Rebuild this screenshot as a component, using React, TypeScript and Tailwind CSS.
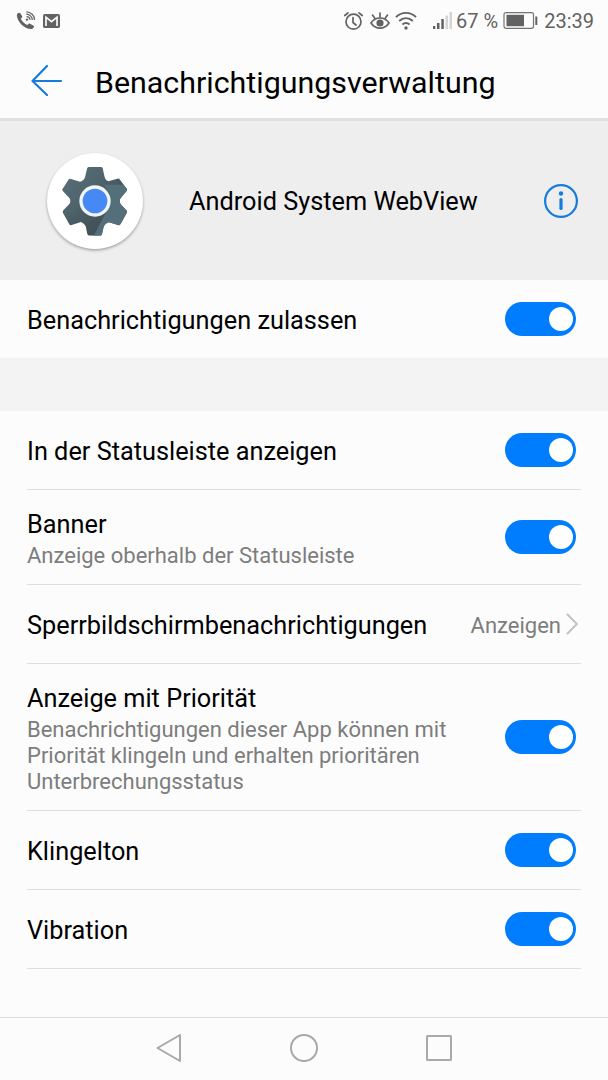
import { useState, type ReactNode } from 'react'
import clsx from 'clsx'

interface SettingDef {
  id: string
  title: string
  summary?: string
  value?: string
  rowClass: string
}

const SETTINGS: SettingDef[] = [
  { id: 'statusbar', title: 'In der Statusleiste anzeigen', rowClass: 'h-[79px]' },
  { id: 'banner', title: 'Banner', summary: 'Anzeige oberhalb der Statusleiste', rowClass: 'h-[95px]' },
  { id: 'lockscreen', title: 'Sperrbildschirmbenachrichtigungen', value: 'Anzeigen', rowClass: 'h-[79px]' },
  {
    id: 'priority',
    title: 'Anzeige mit Priorität',
    summary: 'Benachrichtigungen dieser App können mit Priorität klingeln und erhalten prioritären Unterbrechungsstatus',
    rowClass: 'h-[147px]',
  },
  { id: 'ringtone', title: 'Klingelton', rowClass: 'h-[79px]' },
  { id: 'vibration', title: 'Vibration', rowClass: 'h-[79px]' },
]

function Toggle({ label }: { label: string }) {
  const [on, setOn] = useState(true)

  return (
    <button
      type="button"
      role="switch"
      aria-checked={on}
      aria-label={label}
      onClick={() => setOn(!on)}
      className={clsx(
        'flex h-[34px] w-[71px] shrink-0 items-center rounded-full px-[3px]',
        on ? 'justify-end bg-[#007dff]' : 'justify-start bg-[#c4c4c4]',
      )}
    >
      <span className="size-6 rounded-full bg-white" />
    </button>
  )
}

function StatusBar() {
  return (
    <div className="flex h-[42px] items-center pl-4 pr-[14px] text-[20px] leading-none text-[#626262]">
      <svg className="h-5 w-5 shrink-0" viewBox="0 0 20 20" fill="none">
        <path
          d="M1.300 2.800C2.300 1.600 3.400 1.400 4.300 2.300L6.100 5.100c.3.600.2 1.100-.3 1.600l-1 1c1.300 2.700 3.400 4.900 6.400 6.200l1.200-1c.5-.4 1-.4 1.600-.1l3.200 1.700c.8.500 1 1.100.6 1.800-.5 1-1.500 1.900-2.900 1.800C8.200 18 1 10.200.9 4.400c0-.6.1-1.100.4-1.600Z"
          fill="#626262"
        />
        <circle cx="11" cy="8.600" r="1.200" fill="#626262" />
        <path d="M10.500 5.600a3.500 3.500 0 0 1 3.500 3.500M10.300 3.200a5.900 5.900 0 0 1 6 5.900M10.300.9a8.200 8.200 0 0 1 8.300 8.200" stroke="#626262" strokeWidth="1.200" />
      </svg>
      <svg className="ml-[7px] h-[14px] w-[17px] shrink-0" viewBox="0 0 17 14" fill="none">
        <rect width="17" height="14" rx="1.700" fill="#626262" />
        <path d="M3 12V3.200l5.500 4.500L14 3.200V12" stroke="#fcfcfc" strokeWidth="1.700" />
      </svg>
      <svg className="ml-[283px] h-5 w-5 shrink-0" viewBox="0 0 20 20" fill="none" stroke="#626262" strokeWidth="1.700">
        <circle cx="10.500" cy="10.700" r="7.500" />
        <path d="M10 6.500v5l3 2.500M1.800 4.500 5 1.800M16 1.800l3.200 2.700" strokeLinecap="round" />
      </svg>
      <svg className="ml-[7px] h-5 w-5 shrink-0" viewBox="0 0 20 20" fill="none" stroke="#626262" strokeWidth="1.700">
        <path d="M1 12c2.200-3.300 5.200-5 9-5s6.800 1.700 9 5c-2.200 3.400-5.200 5.100-9 5.100S3.200 15.400 1 12Z" />
        <path d="M10 6V2M4.800 7.300 2.500 4.100M15.200 7.300l2.300-3.200" strokeLinecap="round" />
        <circle cx="10" cy="12" r="3.600" fill="#626262" stroke="none" />
      </svg>
      <svg className="ml-[5px] h-5 w-[22px] shrink-0" viewBox="0 0 22 20" fill="none" stroke="#626262" strokeWidth="1.900">
        <path d="M1 6.200C6.500.4 15.500.4 21 6.200M4.200 10c4-3.900 9.600-3.900 13.600 0M7.400 13.500c2.200-1.900 5-1.900 7.200 0" />
        <circle cx="11" cy="17" r="1.700" fill="#626262" stroke="none" />
      </svg>
      <svg className="ml-[15px] h-5 w-5 shrink-0" viewBox="0 0 20 20">
        <path d="M1 15h2.300v3H1zM5 12h2.500v6H5zM9.300 8h2.500v10H9.300z" fill="#626262" />
        <path d="M13.500 4.500H16V18h-2.500zM17.500 1H20v17h-2.500z" fill="#d4d4d4" />
      </svg>
      <span className="ml-1 w-[42px] shrink-0 whitespace-nowrap">67 %</span>
      <svg className="mb-px ml-[5px] h-[17px] w-[35px] shrink-0" viewBox="0 0 35 17" fill="none">
        <rect x="1" y=".7" width="29.500" height="15.600" rx="2" stroke="#747474" strokeWidth="1.200" />
        <path d="M3.500 2.800h17.500v11.400H3.500z" fill="#626262" />
        <path d="M32.300 4.500h2v8.500h-2z" fill="#626262" />
      </svg>
      <span className="ml-auto shrink-0">23:39</span>
    </div>
  )
}

function WebViewIcon() {
  return (
    <div className="size-24 shrink-0 rounded-full bg-white shadow-[0_1.5px_3px_rgba(0,0,0,0.32)]">
      <svg className="size-24" viewBox="51 129 288 288">
        <defs>
          <linearGradient id="gear" x1="0" y1="0" x2="1" y2="1">
            <stop offset="0" stopColor="#5a727b" />
            <stop offset="0.35" stopColor="#50656d" />
            <stop offset="0.65" stopColor="#435359" />
            <stop offset="1" stopColor="#3b494f" />
          </linearGradient>
          <clipPath id="teeth">
            <path d="M178 171h35q4 0 5 4l6 27q2 9 11 12l27-8q5-2 8 3l20 27q3 5-1 8l-17 20q-6 9 0 19l17 18q4 4 1 8l-18 32q-3 6-8 4l-27-8q-11 2-16 13l-5 22q-1 5-6 5h-32q-5 0-6-5l-5-23q-4-9-14-13l-28 9q-5 2-8-4l-18-32q-2-4 1-8l18-19q6-9 0-18l-19-20q-4-4-1-8l17-26q3-5 8-3l27 8q12-3 15-13l6-26q1-5 5-5Z" />
          </clipPath>
        </defs>
        <g clipPath="url(#teeth)">
          <path d="M90 165h215v218H90z" fill="url(#gear)" />
          <path d="M222 224h85v160H188l34-67 14-23 4-43Z" fill="#546f7a" />
        </g>
        <circle cx="195" cy="273" r="47" fill="#f0f5fa" />
        <circle cx="195" cy="273" r="37" fill="#4688f4" />
      </svg>
    </div>
  )
}

function SettingRow({ setting }: { setting: SettingDef }) {
  const { title, summary, value, rowClass } = setting

  return (
    <div className={clsx('ml-[27px] mr-[27px] flex shrink-0 items-center border-b border-[#dedede]', rowClass)}>
      <div className="min-w-0 flex-1">
        <div className={clsx('whitespace-nowrap text-[25.300px] leading-[34px]', summary ? 'pt-0.5' : 'pt-[3px]')}>
          {title}
        </div>
        {summary && <p className="mt-px w-[440px] text-[22px] leading-[26px] text-[#7d7d7d]">{summary}</p>}
      </div>
      {value ? (
        <div className="mr-[3px] flex items-center gap-[5px]">
          <span className="pt-0.5 text-[22px] text-[#7d7d7d]">{value}</span>
          <svg className="h-[22px] w-3" viewBox="0 0 12 22" fill="none" stroke="#c0c0c0" strokeWidth="1.900">
            <path d="m1 1 10 10L1 21" />
          </svg>
        </div>
      ) : (
        <div className="mr-[5px] flex">
          <Toggle label={title} />
        </div>
      )}
    </div>
  )
}

function NavButton({ label, children }: { label: string; children: ReactNode }) {
  return (
    <button type="button" aria-label={label} className="flex w-[135px] items-center justify-center">
      <svg className="size-8" viewBox="0 0 32 32" fill="none" stroke="#a9a9a9" strokeWidth="2" strokeLinejoin="round">
        {children}
      </svg>
    </button>
  )
}

export default function App() {
  return (
    <div className="flex h-[1080px] w-[608px] flex-col overflow-hidden bg-[#fcfcfc] font-['Roboto',sans-serif] text-black">
      <StatusBar />

      <header className="flex h-[79px] shrink-0 items-center border-b-[3px] border-[#e0e0e0] pl-[31px]">
        <svg className="h-8 w-8 shrink-0" viewBox="0 0 32 32" fill="none" stroke="#167bdd" strokeWidth="2.200" strokeLinecap="round" strokeLinejoin="round">
          <path d="M16 2 1.500 17 16 31M1.500 17H30" />
        </svg>
        <h1 className="ml-8 whitespace-nowrap pt-1.5 text-[30.400px] leading-9">Benachrichtigungsverwaltung</h1>
      </header>

      {/* App info */}
      <section className="flex h-[159px] shrink-0 items-center bg-[#eee] pl-[47px] pr-[30px]">
        <WebViewIcon />
        <span className="ml-[46px] flex-1 whitespace-nowrap pt-[3px] text-[25.300px]">Android System WebView</span>
        <svg className="h-[34px] w-[34px] shrink-0" viewBox="0 0 34 34" fill="none" stroke="#167bdd">
          <circle cx="17" cy="17" r="15.900" strokeWidth="2.200" />
          <path d="M17 15.500v9" strokeWidth="3.200" strokeLinecap="round" />
          <circle cx="17" cy="9.500" r="2.200" fill="#167bdd" stroke="none" />
        </svg>
      </section>

      <section className="flex h-[78px] shrink-0 items-center justify-between pl-[27px] pr-8">
        <span className="pt-[3px] text-[25.300px]">Benachrichtigungen zulassen</span>
        <Toggle label="Benachrichtigungen zulassen" />
      </section>

      <div className="h-[53px] shrink-0 bg-[#f3f3f3]" />

      <main className="flex flex-1 flex-col">
        {SETTINGS.map((s) => (
          <SettingRow key={s.id} setting={s} />
        ))}
      </main>

      <nav className="flex h-[63px] shrink-0 justify-center border-t border-[#dedede] pb-0.5">
        <NavButton label="Zurück">
          <path d="M4.500 16 27 3v26Z" />
        </NavButton>
        <NavButton label="Startseite">
          <circle cx="16" cy="16" r="13" />
        </NavButton>
        <NavButton label="Letzte Apps">
          <rect x="4" y="4" width="24" height="24" rx=".5" />
        </NavButton>
      </nav>
    </div>
  )
}
